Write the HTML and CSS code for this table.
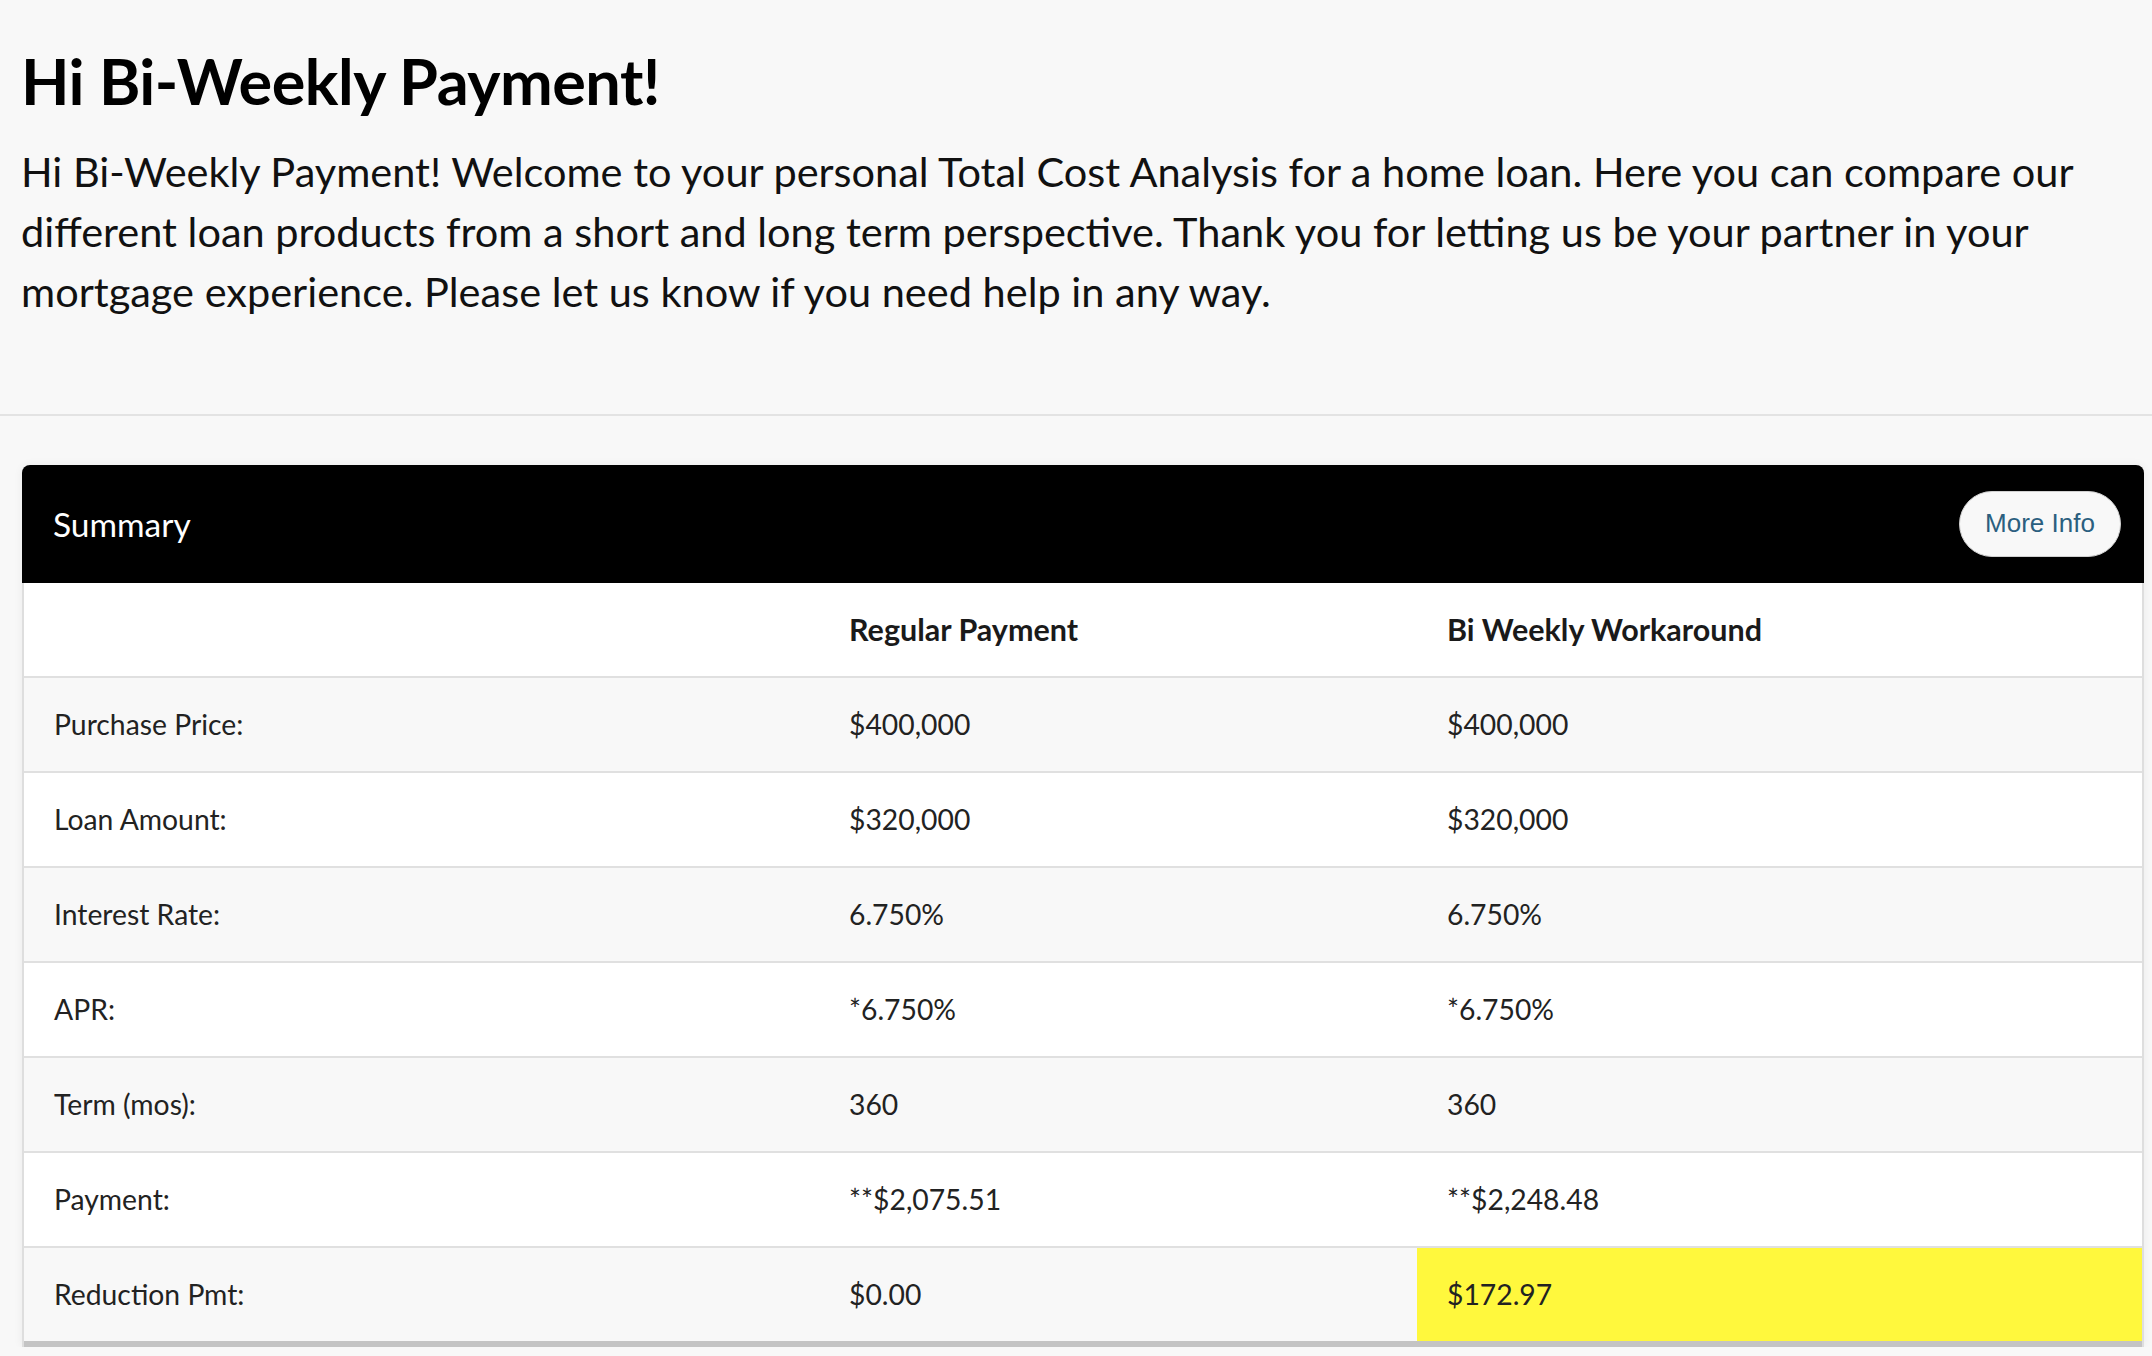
FILE: index.html
```html
<!DOCTYPE html>
<html lang="en">
<head>
  <meta charset="UTF-8">
  <meta name="viewport" content="width=device-width, initial-scale=1.0">
  <title>Total Cost Analysis</title>
  <link rel="stylesheet" href="styles.css">
</head>
<body>
  <header class="intro">
    <h1>Hi Bi-Weekly Payment!</h1>
    <p>Hi Bi-Weekly Payment! Welcome to your personal Total Cost Analysis for a home loan. Here you can compare our different loan products from a short and long term perspective. Thank you for letting us be your partner in your mortgage experience. Please let us know if you need help in any way.</p>
  </header>

  <hr class="divider">

  <section class="card">
    <div class="card-head">
      <h2>Summary</h2>
      <button type="button" class="info-btn">More Info</button>
    </div>

    <table class="summary">
      <colgroup>
        <col class="col-label">
        <col class="col-regular">
        <col class="col-biweekly">
      </colgroup>
      <thead>
        <tr>
          <th></th>
          <th>Regular Payment</th>
          <th>Bi Weekly Workaround</th>
        </tr>
      </thead>
      <tbody>
        <tr>
          <td>Purchase Price:</td>
          <td>$400,000</td>
          <td>$400,000</td>
        </tr>
        <tr>
          <td>Loan Amount:</td>
          <td>$320,000</td>
          <td>$320,000</td>
        </tr>
        <tr>
          <td>Interest Rate:</td>
          <td>6.750%</td>
          <td>6.750%</td>
        </tr>
        <tr>
          <td>APR:</td>
          <td>*6.750%</td>
          <td>*6.750%</td>
        </tr>
        <tr>
          <td>Term (mos):</td>
          <td>360</td>
          <td>360</td>
        </tr>
        <tr>
          <td>Payment:</td>
          <td>**$2,075.51</td>
          <td>**$2,248.48</td>
        </tr>
        <tr class="last">
          <td>Reduction Pmt:</td>
          <td>$0.00</td>
          <td class="highlight">$172.97</td>
        </tr>
      </tbody>
    </table>
  </section>
</body>
</html>
```

FILE: styles.css
```css
body {
  font-family: Lato, "Open Sans", sans-serif;
  margin: 0;
  padding: 0;
  background-color: #f8f8f8;
  color: #000;
}
.intro {
  padding: 43px 21px 0;
}
.intro h1 {
  margin: 0 0 22px;
  font-size: 63px;
  font-weight: 700;
  line-height: 1.2;
  letter-spacing: -0.5px;
}
.intro p {
  margin: 0;
  font-size: 41.5px;
  line-height: 60px;
  color: #111;
}
.divider {
  margin: 93px 0 0;
  border: none;
  border-top: 2px solid #e3e3e3;
}
.card {
  margin: 49px 8px 0 22px;
  background: #fff;
  border-left: 2px solid #dedede;
  border-right: 2px solid #dedede;
  border-radius: 8px 8px 0 0;
  box-shadow: 0 0 10px rgba(0, 0, 0, 0.06);
}
.card-head {
  display: flex;
  align-items: center;
  justify-content: space-between;
  height: 118px;
  padding: 0 23px 0 31px;
  margin: 0 -2px;
  background: #000;
  border-radius: 8px 8px 0 0;
}
.card-head h2 {
  margin: 0;
  color: #fff;
  font-size: 33.5px;
  font-weight: 400;
}
.info-btn {
  width: 162px;
  height: 66px;
  padding: 0;
  background: #f8f8f8;
  color: #2b5f7f;
  border: 1px solid #d0d0d0;
  border-radius: 33px;
  font-family: "Liberation Sans", Arial, sans-serif;
  font-size: 26px;
  cursor: pointer;
}
.summary {
  width: 100%;
  border-collapse: collapse;
  font-size: 28.3px;
  color: #222;
}
.col-label {
  width: 795px;
}
.col-regular {
  width: 598px;
}
.summary th,
.summary td {
  height: 93px;
  padding: 0 0 0 30px;
  text-align: left;
  vertical-align: middle;
  border-bottom: 2px solid #e0e0e0;
}
.summary th {
  font-size: 30.5px;
  font-weight: 700;
  color: #1a1a1a;
}
.summary tbody tr:nth-child(odd) {
  background: #f8f8f8;
}
.summary tbody tr:nth-child(even) {
  background: #fff;
}
.summary tr.last td {
  border-bottom: 6px solid #c4c4c4;
}
.summary td.highlight {
  background: #fff83d;
}
```
